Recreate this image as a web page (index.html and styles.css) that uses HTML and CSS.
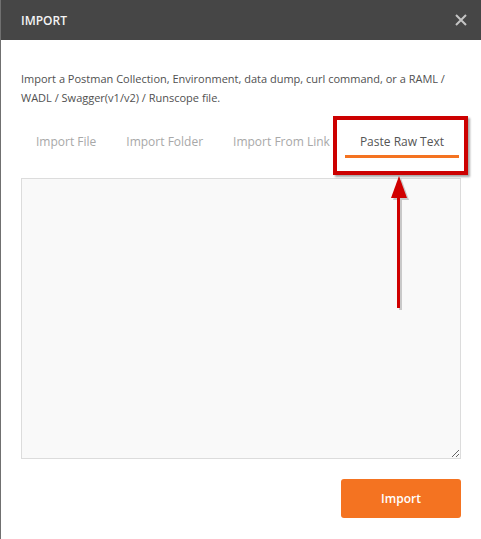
FILE: index.html
```html
<!DOCTYPE html>
<html>
<head>
<meta charset="utf-8">
<link rel="stylesheet" href="styles.css">
</head>
<body>
<div class="dialog">
  <div class="header">
    <span class="title">IMPORT</span>
    <svg class="close" width="12" height="12" viewBox="0 0 12 12"><path d="M1 1L11 11M11 1L1 11" stroke="#c4c4c4" stroke-width="2"/></svg>
  </div>
  <div class="content">
    <p class="desc">Import a Postman Collection, Environment, data dump, curl command, or a RAML / WADL / Swagger(v1/v2) / Runscope file.</p>
    <div class="tabs">
      <div class="tab">Import File</div>
      <div class="tab">Import Folder</div>
      <div class="tab">Import From Link</div>
      <div class="tab active">Paste Raw Text</div>
    </div>
    <textarea class="raw"></textarea>
    <div class="actions">
      <button class="btn">Import</button>
    </div>
  </div>
  <div class="callout"></div>
  <svg class="arrow" width="30" height="140" viewBox="0 0 30 140">
    <g transform="translate(2,2)" fill="#999" opacity="0.5">
      <path d="M14 0L22 22H6Z"/>
      <rect x="12" y="18" width="3" height="114"/>
    </g>
    <path d="M14 0L22 22H6Z" fill="#d00000"/>
    <rect x="12" y="18" width="3" height="114" fill="#d00000"/>
  </svg>
</div>
</body>
</html>
```

FILE: styles.css
```css
* { box-sizing: border-box; }
html, body { margin: 0; padding: 0; background: #fff; }
body {
  font-family: "Open Sans", "Liberation Sans", sans-serif;
  width: 481px;
  height: 539px;
  overflow: hidden;
}
.dialog {
  position: relative;
  height: 539px;
  border-left: 1px solid #707070;
  background: #fff;
}
.header {
  height: 40px;
  background: #464646;
  display: flex;
  align-items: center;
  justify-content: space-between;
  padding: 0 14px 0 20px;
}
.title {
  color: #f4f4f4;
  font-size: 12px;
  font-weight: 600;
}
.close { display: block; }
.content {
  padding: 29px 20px 0 20px;
}
.desc {
  margin: 0;
  font-size: 11px;
  line-height: 19px;
  color: #505050;
}
.tabs {
  display: flex;
  margin-top: 15px;
}
.tab {
  padding: 11px 15px 4px;
  font-size: 12px;
  line-height: 18px;
  color: #a8a8a8;
  border-bottom: 3px solid transparent;
}
.tab.active {
  color: #555;
  border-bottom-color: #f47321;
}
.raw {
  display: block;
  margin-top: 20px;
  width: 440px;
  height: 281px;
  background: #f9f9f9;
  border: 1px solid #dcdcdc;
  border-radius: 0;
  resize: both;
  outline: none;
}
.actions {
  display: flex;
  justify-content: flex-end;
  margin-top: 20px;
}
.btn {
  width: 120px;
  height: 39px;
  background: #f47321;
  color: #fff;
  border: none;
  border-radius: 3px;
  font-family: "Open Sans", "Liberation Sans", sans-serif;
  font-size: 12px;
  font-weight: 600;
}
.callout {
  position: absolute;
  left: 332px;
  top: 116px;
  width: 135px;
  height: 59px;
  border: 4px solid #cc0000;
  box-shadow: 2px 2px 2px rgba(0,0,0,0.35);
}
.arrow {
  position: absolute;
  left: 384px;
  top: 176px;
}
```
